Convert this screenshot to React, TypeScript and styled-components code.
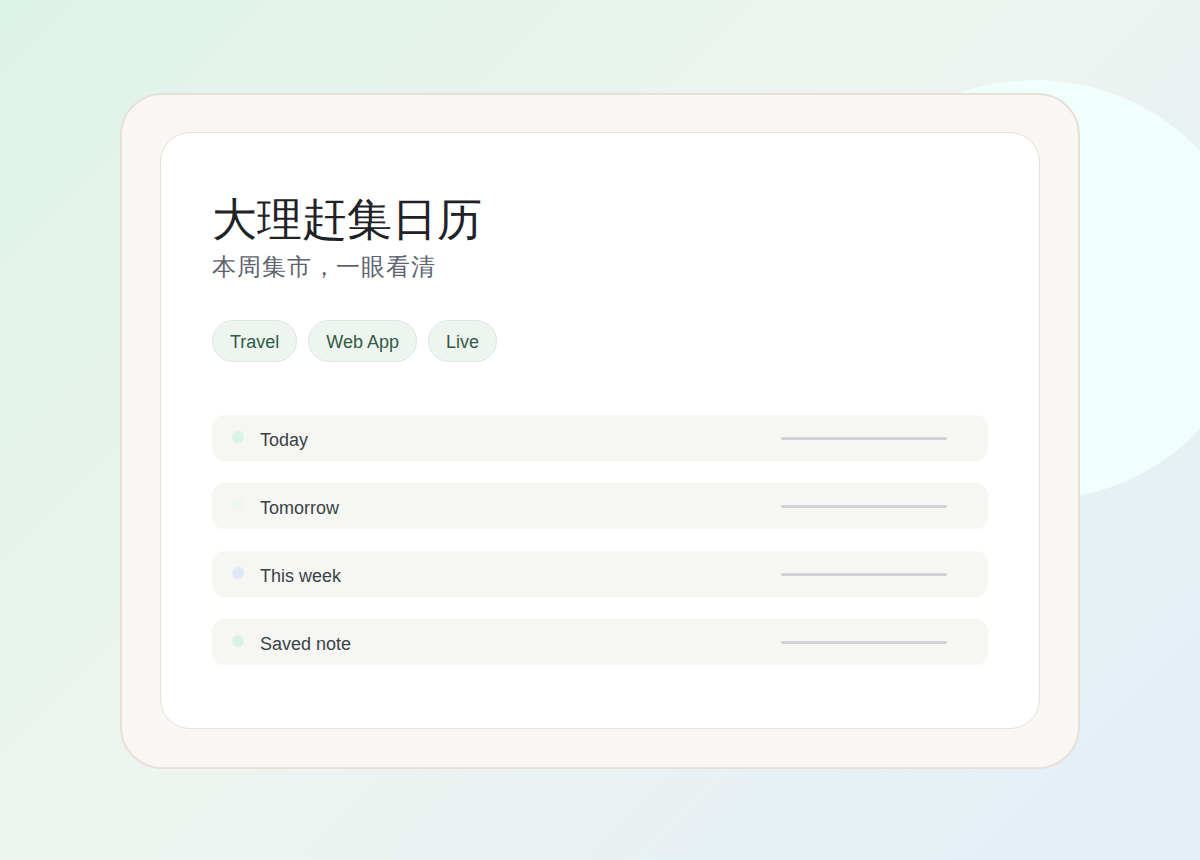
import styled, { createGlobalStyle } from 'styled-components';

const GlobalStyle = createGlobalStyle`
  html, body {
    margin: 0;
    padding: 0;
  }
  body {
    font-family: "Liberation Sans", Arial, sans-serif;
  }
`;

const rows = [
  { label: 'Today', dot: '#d8f3e7' },
  { label: 'Tomorrow', dot: '#eef6f0' },
  { label: 'This week', dot: '#dde9f8' },
  { label: 'Saved note', dot: '#d9f2e5' },
];

const tags = ['Travel', 'Web App', 'Live'];

export default function App() {
  return (
    <>
      <GlobalStyle />
      <Page>
        <Blob />
        <Frame>
          <Card>
            <Title>大理赶集日历</Title>
            <Subtitle>本周集市，一眼看清</Subtitle>
            <Tags>
              {tags.map((t) => (
                <Tag key={t}>{t}</Tag>
              ))}
            </Tags>
            <List>
              {rows.map((r) => (
                <Row key={r.label}>
                  <Dot $color={r.dot} />
                  <Label>{r.label}</Label>
                  <Bar />
                </Row>
              ))}
            </List>
          </Card>
        </Frame>
      </Page>
    </>
  );
}

const Page = styled.div`
  position: relative;
  width: 1200px;
  height: 860px;
  overflow: hidden;
  display: flex;
  align-items: center;
  justify-content: center;
  background: linear-gradient(135deg, #dcf3e9 0%, #eef4ef 45%, #e3eef7 100%);
`;

const Blob = styled.div`
  position: absolute;
  left: 815px;
  top: 80px;
  width: 440px;
  height: 420px;
  border-radius: 50%;
  background: #f0fefc;
`;

const Frame = styled.div`
  position: relative;
  width: 960px;
  margin-top: 2px;
  box-sizing: border-box;
  padding: 37px 38px 38px;
  border: 2px solid #e6e0d6;
  border-radius: 42px;
  background: #f8f7f4;
`;

const Card = styled.div`
  box-sizing: border-box;
  padding: 60px 51px 63px;
  border: 1px solid #e6e0d6;
  border-radius: 30px;
  background: #ffffff;
`;

const Title = styled.h1`
  margin: 0;
  font-size: 45px;
  line-height: 53px;
  font-weight: 400;
  color: #1f2328;
`;

const Subtitle = styled.p`
  margin: 4px 0 0;
  font-size: 24px;
  line-height: 34px;
  color: #5d6470;
  letter-spacing: 0.9px;
`;

const Tags = styled.div`
  display: flex;
  gap: 11px;
  margin-top: 36px;
`;

const Tag = styled.span`
  display: inline-flex;
  align-items: center;
  height: 42px;
  box-sizing: border-box;
  padding: 2px 17px 0;
  border: 1px solid #dde7e0;
  border-radius: 21px;
  background: #eef4ef;
  color: #2f5b44;
  font-size: 18px;
`;

const List = styled.div`
  display: flex;
  flex-direction: column;
  gap: 22px;
  margin-top: 53px;
`;

const Row = styled.div`
  display: flex;
  align-items: center;
  height: 46px;
  box-sizing: border-box;
  padding: 0 41px 0 20px;
  border-radius: 12px;
  background: #f6f7f3;
`;

const Dot = styled.span<{ $color: string }>`
  width: 12px;
  height: 12px;
  margin-bottom: 3px;
  border-radius: 50%;
  background: ${(p) => p.$color};
  flex-shrink: 0;
`;

const Label = styled.span`
  flex: 1;
  margin-left: 16px;
  padding-top: 4px;
  font-size: 18px;
  color: #3b3f4a;
`;

const Bar = styled.span`
  width: 166px;
  height: 3px;
  border-radius: 2px;
  background: #d1d3d6;
`;
